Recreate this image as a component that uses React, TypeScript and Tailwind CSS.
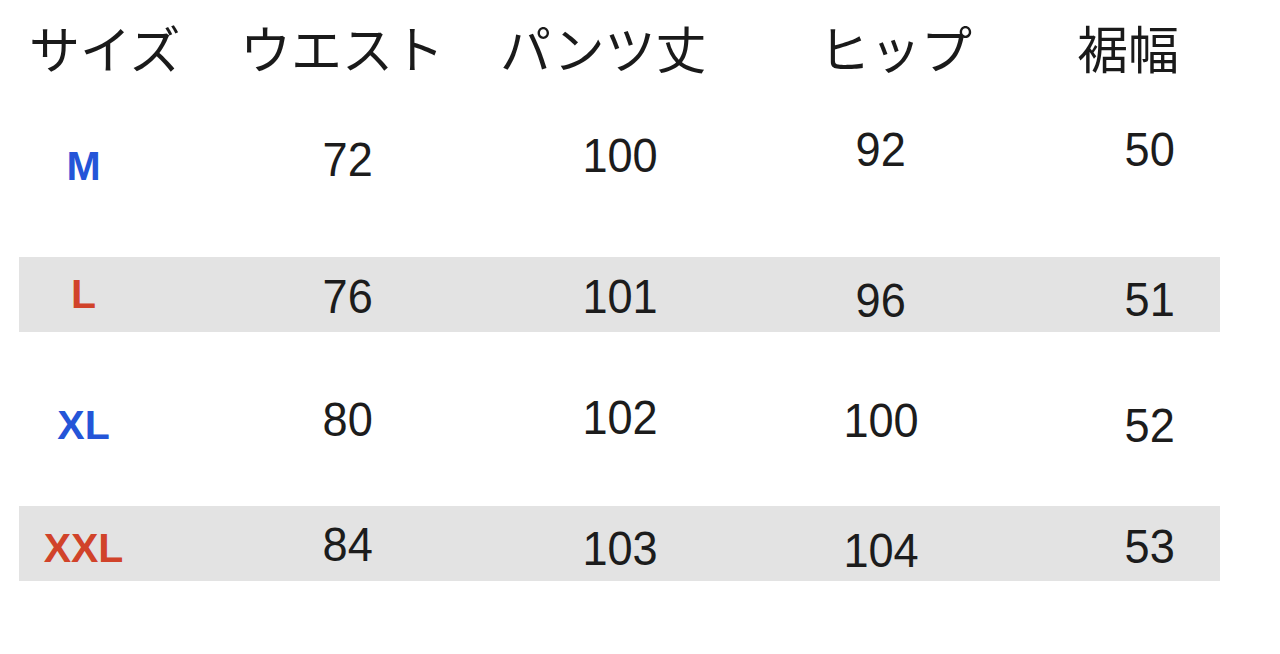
import React from 'react';

type Row = {
  size: string;
  color: string;
  band: boolean;
  height: string;
  values: { v: string; shift: string }[];
  sizeShift: string;
};

const headers = [
  { label: 'サイズ', cls: 'w-[211px]' },
  { label: 'ウエスト', cls: 'w-[260px]' },
  { label: 'パンツ丈', cls: 'w-[319px]' },
  { label: 'ヒップ', cls: 'w-[258px]' },
  { label: '裾幅', cls: 'flex-1' },
];

const rows: Row[] = [
  {
    size: 'M',
    color: 'text-[#2455d8]',
    band: false,
    height: 'h-[122px]',
    sizeShift: 'translate-y-[9px]',
    values: [
      { v: '72', shift: 'translate-y-[3px]' },
      { v: '100', shift: 'translate-y-[-1px]' },
      { v: '92', shift: 'translate-y-[-7px]' },
      { v: '50', shift: 'translate-y-[-7px]' },
    ],
  },
  {
    size: 'L',
    color: 'text-[#d1432a]',
    band: true,
    height: 'h-[75px]',
    sizeShift: 'translate-y-[0px]',
    values: [
      { v: '76', shift: 'translate-y-[2px]' },
      { v: '101', shift: 'translate-y-[2px]' },
      { v: '96', shift: 'translate-y-[6px]' },
      { v: '51', shift: 'translate-y-[5px]' },
    ],
  },
  {
    size: 'XL',
    color: 'text-[#2455d8]',
    band: false,
    height: 'h-[174px]',
    sizeShift: 'translate-y-[6px]',
    values: [
      { v: '80', shift: 'translate-y-[1px]' },
      { v: '102', shift: 'translate-y-[-1px]' },
      { v: '100', shift: 'translate-y-[2px]' },
      { v: '52', shift: 'translate-y-[7px]' },
    ],
  },
  {
    size: 'XXL',
    color: 'text-[#d1432a]',
    band: true,
    height: 'h-[75px]',
    sizeShift: 'translate-y-[5px]',
    values: [
      { v: '84', shift: 'translate-y-[1px]' },
      { v: '103', shift: 'translate-y-[5px]' },
      { v: '104', shift: 'translate-y-[7px]' },
      { v: '53', shift: 'translate-y-[3px]' },
    ],
  },
];

// column centers line up with the reference chart
const cols = ['w-[129px]', 'w-[400px]', 'w-[144px]', 'w-[378px]', 'w-[160px]'];

const SizeRow = ({ row }: { row: Row }) => (
  <div
    className={`ml-[19px] w-[1201px] ${row.height} flex items-center ${
      row.band ? 'bg-[#e3e3e3]' : ''
    }`}
  >
    <div className={`${cols[0]} shrink-0 text-center`}>
      <span
        className={`inline-block text-[41px] leading-none font-semibold ${row.color} ${row.sizeShift}`}
      >
        {row.size}
      </span>
    </div>
    {row.values.map((cell, i) => (
      <div key={i} className={`${cols[i + 1]} shrink-0 text-center`}>
        <span
          className={`inline-block text-[48px] leading-none text-[#1c1c1c] scale-x-[0.94] ${cell.shift}`}
        >
          {cell.v}
        </span>
      </div>
    ))}
  </div>
);

export default function App() {
  return (
    <div
      className="w-[1280px] h-[654px] bg-white overflow-hidden"
      style={{ fontFamily: '"Liberation Sans", Arial, sans-serif' }}
    >
      <div
        className="h-[96px] flex items-center pl-[29px] pb-[1px] text-[51px] leading-none text-[#1a1a1a]"
        style={{ fontFamily: '"Noto Sans CJK JP", "Noto Sans", sans-serif' }}
      >
        {headers.map((h) => (
          <div key={h.label} className={`${h.cls} shrink-0 whitespace-nowrap`}>
            {h.label}
          </div>
        ))}
      </div>

      <SizeRow row={rows[0]} />
      <div className="h-[39px]" />
      <SizeRow row={rows[1]} />
      <SizeRow row={rows[2]} />
      <SizeRow row={rows[3]} />
    </div>
  );
}
